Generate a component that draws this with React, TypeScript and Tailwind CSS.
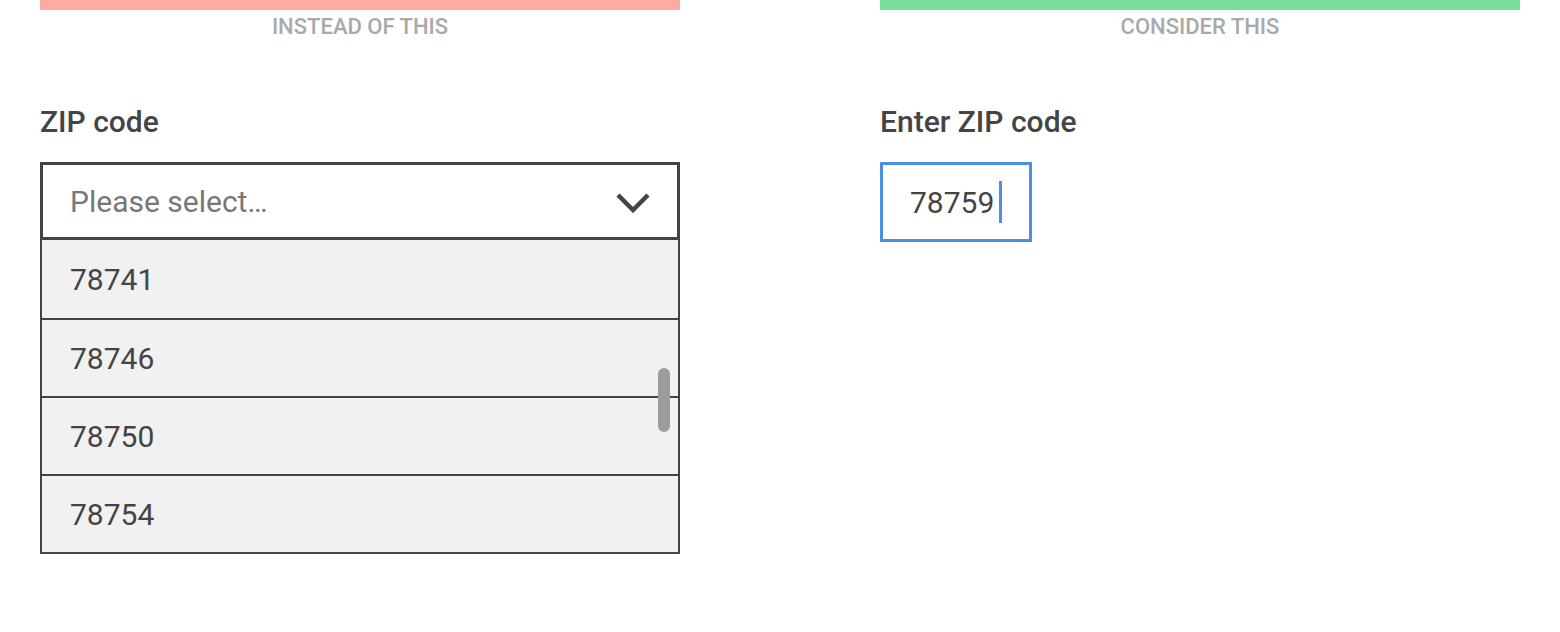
import React from "react";

const rows = ["78741", "78746", "78750", "78754"];

export default function App() {
  return (
    <div
      className="w-[1560px] h-[632px] bg-white flex gap-[200px] px-[40px]"
      style={{ fontFamily: "Roboto, 'Liberation Sans', sans-serif" }}
    >
      <div className="w-[640px] flex flex-col">
        <div className="h-[10px] bg-[#ffab9f]" />
        <div className="mt-[4px] text-center text-[22px] leading-[26px] font-medium text-[#a9a9a9]">
          INSTEAD OF THIS
        </div>
        <div className="mt-[64px] text-[30px] leading-[36px] font-medium text-[#444]">ZIP code</div>
        <div className="mt-[22px] h-[78px] border-[3px] border-[#444] bg-white flex items-center pl-[27px] pr-[27px] justify-between">
          <span className="text-[30px] text-[#777]">Please select…</span>
          <svg width="34" height="20" viewBox="0 0 34 20" fill="none" className="mt-[3px]">
            <path d="M2 2 L17 17 L32 2" stroke="#444" strokeWidth="4.5" />
          </svg>
        </div>
        <div className="relative border-x-2 border-b-2 border-[#444] bg-[#f1f1f1]">
          {rows.map((r, i) => (
            <div
              key={r}
              className={`h-[78px] flex items-center pl-[28px] text-[30px] text-[#444] ${i > 0 ? "border-t-2 border-[#444]" : ""}`}
            >
              {r}
            </div>
          ))}
          <div className="absolute left-[616px] top-[128px] w-[12px] h-[64px] rounded-full bg-[#9b9b9b]" />
        </div>
      </div>
      <div className="w-[640px] flex flex-col">
        <div className="h-[10px] bg-[#79e09c]" />
        <div className="mt-[4px] text-center text-[22px] leading-[26px] font-medium text-[#a9a9a9]">
          CONSIDER THIS
        </div>
        <div className="mt-[64px] text-[30px] leading-[36px] font-medium text-[#444]">Enter ZIP code</div>
        <div className="mt-[22px] w-[152px] h-[80px] border-[3px] border-[#4a90e2] flex items-center pl-[27px]">
          <span className="text-[30px] text-[#444]">78759</span>
          <span className="ml-[5px] w-[3px] h-[42px] bg-[#4a90e2]" />
        </div>
      </div>
    </div>
  );
}
